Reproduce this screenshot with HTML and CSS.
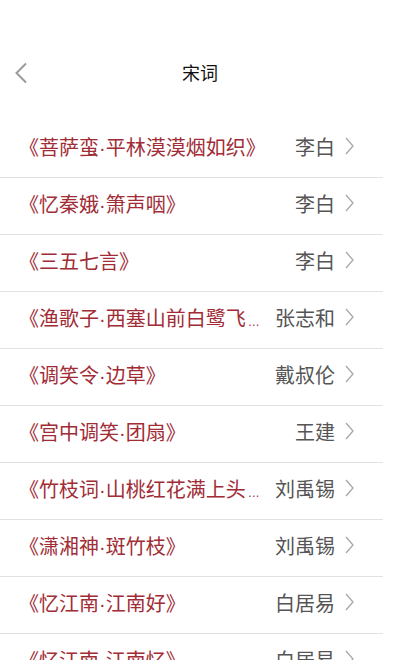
FILE: index.html
```html
<!DOCTYPE html>
<html lang="zh">
<head>
    <meta charset="UTF-8">
    <meta name="viewport" content="width=device-width, initial-scale=1.0">
    <title>宋词</title>
    <link rel="stylesheet" href="styles.css">
</head>
<body>
    <header class="nav">
        <a class="back" href="#">
            <svg width="14" height="22" viewBox="0 0 14 22"><path d="M12 1.5 L2.5 11 L12 20.5" fill="none" stroke="#9a9a9a" stroke-width="2"/></svg>
        </a>
        <h1 class="title">宋词</h1>
    </header>
    <ul class="list">
        <li class="row"><span class="name">《菩萨蛮·平林漠漠烟如织》</span><span class="author">李白</span><svg class="arrow" width="9" height="18" viewBox="0 0 9 18"><path d="M1 1 L8 9 L1 17" fill="none" stroke="#a8a8a8" stroke-width="1.3"/></svg></li>
        <li class="row"><span class="name">《忆秦娥·箫声咽》</span><span class="author">李白</span><svg class="arrow" width="9" height="18" viewBox="0 0 9 18"><path d="M1 1 L8 9 L1 17" fill="none" stroke="#a8a8a8" stroke-width="1.3"/></svg></li>
        <li class="row"><span class="name">《三五七言》</span><span class="author">李白</span><svg class="arrow" width="9" height="18" viewBox="0 0 9 18"><path d="M1 1 L8 9 L1 17" fill="none" stroke="#a8a8a8" stroke-width="1.3"/></svg></li>
        <li class="row"><span class="name" title="《渔歌子·西塞山前白鹭飞》">《渔歌子·西塞山前白鹭飞<span class="more">…</span></span><span class="author">张志和</span><svg class="arrow" width="9" height="18" viewBox="0 0 9 18"><path d="M1 1 L8 9 L1 17" fill="none" stroke="#a8a8a8" stroke-width="1.3"/></svg></li>
        <li class="row"><span class="name">《调笑令·边草》</span><span class="author">戴叔伦</span><svg class="arrow" width="9" height="18" viewBox="0 0 9 18"><path d="M1 1 L8 9 L1 17" fill="none" stroke="#a8a8a8" stroke-width="1.3"/></svg></li>
        <li class="row"><span class="name">《宫中调笑·团扇》</span><span class="author">王建</span><svg class="arrow" width="9" height="18" viewBox="0 0 9 18"><path d="M1 1 L8 9 L1 17" fill="none" stroke="#a8a8a8" stroke-width="1.3"/></svg></li>
        <li class="row"><span class="name" title="《竹枝词·山桃红花满上头》">《竹枝词·山桃红花满上头<span class="more">…</span></span><span class="author">刘禹锡</span><svg class="arrow" width="9" height="18" viewBox="0 0 9 18"><path d="M1 1 L8 9 L1 17" fill="none" stroke="#a8a8a8" stroke-width="1.3"/></svg></li>
        <li class="row"><span class="name">《潇湘神·斑竹枝》</span><span class="author">刘禹锡</span><svg class="arrow" width="9" height="18" viewBox="0 0 9 18"><path d="M1 1 L8 9 L1 17" fill="none" stroke="#a8a8a8" stroke-width="1.3"/></svg></li>
        <li class="row"><span class="name">《忆江南·江南好》</span><span class="author">白居易</span><svg class="arrow" width="9" height="18" viewBox="0 0 9 18"><path d="M1 1 L8 9 L1 17" fill="none" stroke="#a8a8a8" stroke-width="1.3"/></svg></li>
        <li class="row"><span class="name">《忆江南·江南忆》</span><span class="author">白居易</span><svg class="arrow" width="9" height="18" viewBox="0 0 9 18"><path d="M1 1 L8 9 L1 17" fill="none" stroke="#a8a8a8" stroke-width="1.3"/></svg></li>
    </ul>
</body>
</html>
```
FILE: styles.css
```css
body
{
    margin:0;
    background-color:#fff;
    font-family:"Liberation Sans","Noto Sans CJK SC",sans-serif;
    overflow:hidden;
}
.nav
{
    position:relative;
    height:50px;
    margin-top:47px;
    display:flex;
    align-items:center;
    justify-content:center;
}
.back
{
    position:absolute;
    left:14px;
    top:15px;
}
.title
{
    margin:0;
    font-size:18px;
    font-weight:normal;
    color:#111;
}
.list
{
    list-style:none;
    margin:24px 17px 0 0;
    padding:0;
}
.row
{
    height:50px;
    padding:0 0 6px 19px;
    border-bottom:1px solid #e2e2e2;
    display:flex;
    align-items:center;
}
.name
{
    flex:1;
    min-width:0;
    white-space:nowrap;
    overflow:hidden;
    font-size:20px;
    color:#a12c36;
    margin-right:12px;
}
.more
{
    font-size:12px;
    margin-left:2px;
}
.author
{
    font-size:20px;
    color:#555;
}
.arrow
{
    margin:0 29px 0 10px;
}
```
